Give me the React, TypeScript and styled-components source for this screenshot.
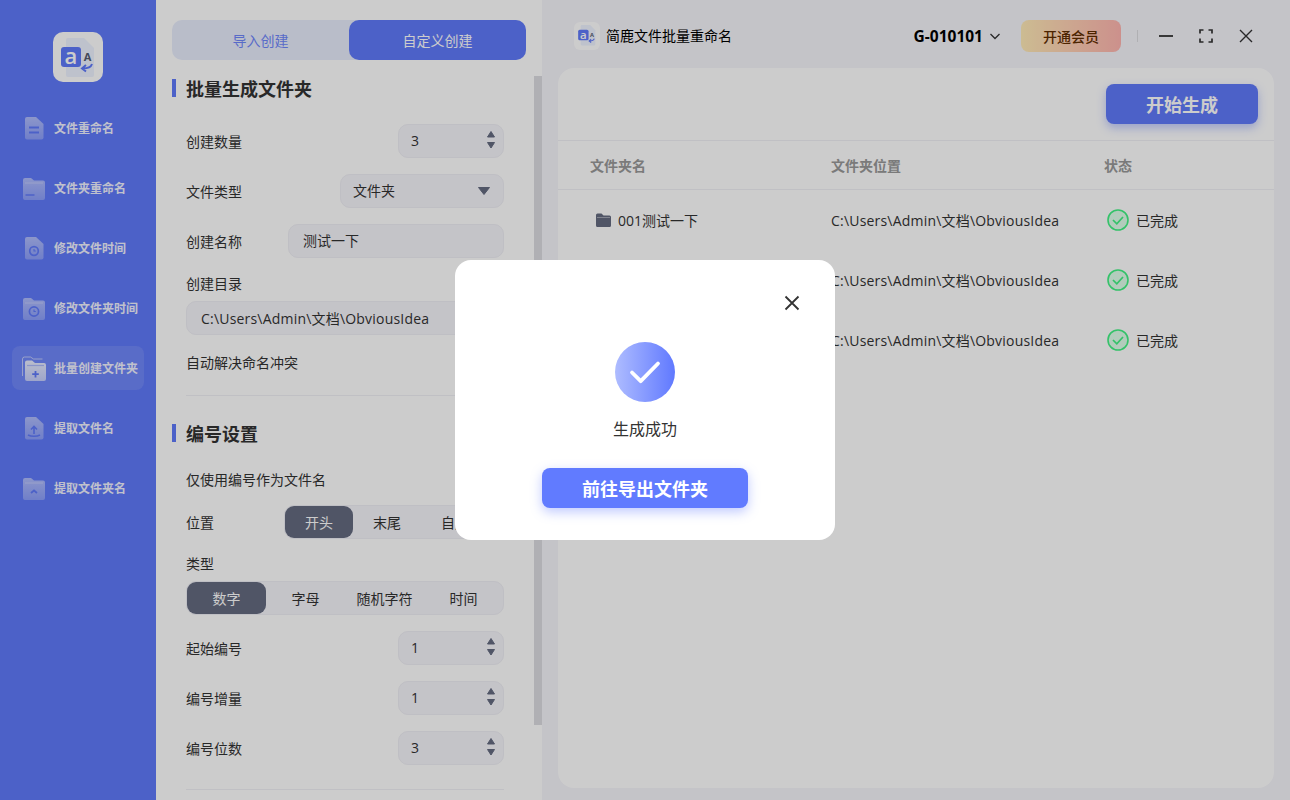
import React from "react";
import styled, { createGlobalStyle } from "styled-components";

const Global = createGlobalStyle`
  html, body { margin: 0; padding: 0; height: 100%; overflow: hidden; }
  body { font-family: "Open Sans", "Noto Sans CJK SC", sans-serif; color: #333; }
  * { box-sizing: border-box; }
`;

const Page = styled.div`
  display: flex;
  width: 100vw;
  height: 100vh;
  background: #f6f5fb;
  overflow: hidden;
`;

const Sidebar = styled.aside`
  width: 156px;
  flex: none;
  background: #607afb;
  display: flex;
  flex-direction: column;
  align-items: center;
  padding-top: 32px;
`;

const LogoBox = styled.div`
  width: 50px;
  height: 50px;
  border-radius: 10px;
  background: #fff;
  margin-bottom: 24px;
  display: flex;
`;

const Nav = styled.nav`
  display: flex;
  flex-direction: column;
  gap: 16px;
  width: 132px;
`;

const NavItem = styled.div<{ $active?: boolean }>`
  height: 44px;
  border-radius: 8px;
  display: flex;
  align-items: center;
  gap: 9px;
  padding-left: 11px;
  font-size: 12px;
  font-weight: 700;
  white-space: nowrap;
  color: #f0f2ff;
  background: ${(p) => (p.$active ? "rgba(255,255,255,0.1)" : "transparent")};
  svg { flex: none; }
`;

const WideIcon = styled.svg`
  margin: 0 -2px 0 -1px;
`;

const Panel = styled.section`
  position: relative;
  width: 386px;
  flex: none;
  height: 100%;
  background: #fff;
  padding: 20px 16px 0;
  overflow: hidden;
`;

const ScrollThumb = styled.div`
  position: absolute;
  right: 0;
  top: 76px;
  width: 8px;
  height: 649px;
  background: #dcdce1;
`;

const Tabs = styled.div`
  display: flex;
  height: 40px;
  border-radius: 10px;
  background: #e8edfc;
`;

const Tab = styled.div<{ $active?: boolean }>`
  flex: 1;
  display: flex;
  align-items: center;
  justify-content: center;
  border-radius: 10px;
  font-size: 14px;
  color: ${(p) => (p.$active ? "#fff" : "#6f86fb")};
  background: ${(p) => (p.$active ? "#607afb" : "transparent")};
`;

const Heading = styled.h2<{ $top: number }>`
  position: relative;
  margin: ${(p) => p.$top}px 0 0;
  padding-left: 14px;
  height: 18px;
  line-height: 20px;
  font-size: 18px;
  font-weight: 700;
  color: #333;
  &::before {
    content: "";
    position: absolute;
    left: 0;
    top: 0;
    width: 4px;
    height: 18px;
    background: #607afb;
  }
`;

const Form = styled.div`
  padding: 0 22px 0 14px;
`;

const Row = styled.div<{ $top?: number }>`
  display: flex;
  align-items: center;
  justify-content: space-between;
  height: 34px;
  margin-top: ${(p) => p.$top ?? 16}px;
  padding-bottom: 1px;
  font-size: 14px;
  color: #333;
`;

const Label = styled.div<{ $top?: number }>`
  height: 20px;
  line-height: 20px;
  margin-top: ${(p) => p.$top ?? 16}px;
  font-size: 14px;
  color: #333;
`;

const Field = styled.div<{ $width?: number; $top?: number }>`
  position: relative;
  width: ${(p) => (p.$width ? `${p.$width}px` : "100%")};
  height: 34px;
  flex: none;
  margin-top: ${(p) => p.$top ?? 0}px;
  display: flex;
  align-items: center;
  padding: 0 0 1px 14px;
  background: #f6f5fb;
  border: 1px solid #efeff5;
  border-radius: 10px;
  font-size: 14px;
  color: #333;
  white-space: nowrap;
`;

const NumberField = styled(Field)`
  padding-left: 12px;
`;

const SelectField = styled(Field)`
  padding-left: 12px;
`;

const PathText = styled.span`
  letter-spacing: 0.2px;
`;

const Stepper = styled.svg`
  position: absolute;
  right: 6px;
  top: 5px;
`;

const SelectArrow = styled.svg`
  position: absolute;
  right: 12px;
  top: 11px;
`;

const Divider = styled.div<{ $top: number }>`
  height: 1px;
  margin-top: ${(p) => p.$top}px;
  background: #f1f1f5;
`;

const Segments = styled.div<{ $top?: number; $width?: number }>`
  display: flex;
  flex: none;
  width: ${(p) => (p.$width ? `${p.$width}px` : "100%")};
  height: 34px;
  margin-top: ${(p) => p.$top ?? 0}px;
  padding: 0;
  align-items: stretch;
  background: #f6f5fb;
  border: 1px solid #efeff5;
  border-radius: 10px;
  font-size: 14px;
`;

const Segment = styled.div<{ $active?: boolean; $even?: boolean }>`
  ${(p) => (p.$even ? "flex: 1 1 0;" : "padding: 0 20px;")}
  display: flex;
  align-items: center;
  justify-content: center;
  white-space: nowrap;
  border-radius: 9px;
  color: ${(p) => (p.$active ? "#fff" : "#333")};
  background: ${(p) => (p.$active ? "#646b80" : "transparent")};
`;

const Main = styled.main`
  flex: 1;
  min-width: 0;
  height: 100%;
  display: flex;
  flex-direction: column;
  padding: 0 16px 12px;
`;

const TitleBar = styled.header`
  flex: none;
  height: 68px;
  display: flex;
  align-items: center;
  justify-content: space-between;
  padding: 4px 21px 0 16px;
`;

const AppName = styled.div`
  display: flex;
  align-items: center;
  gap: 6px;
  font-size: 14px;
  color: #000;
`;

const AppTitle = styled.span`
  margin-bottom: 2px;
`;

const MiniLogo = styled.div`
  width: 26px;
  height: 28px;
  border-radius: 6px;
  background: #fff;
  display: flex;
`;

const TitleRight = styled.div`
  display: flex;
  align-items: center;
`;

const Account = styled.div`
  display: flex;
  align-items: center;
  gap: 6px;
  font-family: "Noto Sans", "Noto Sans CJK SC", sans-serif;
  font-size: 15.5px;
  font-weight: 700;
  color: #000;
  margin-right: 20px;
`;

const VipButton = styled.div`
  width: 100px;
  height: 32px;
  border-radius: 8px;
  display: flex;
  align-items: center;
  justify-content: center;
  font-size: 14px;
  font-weight: 500;
  color: #5f2d00;
  background: linear-gradient(90deg, #ffebb7, #ffb5b0);
`;

const Sep = styled.div`
  width: 1px;
  height: 12px;
  background: #dcdce0;
  margin: 0 21px 0 16px;
`;

const WinControls = styled.div`
  display: flex;
  align-items: center;
  gap: 26px;
`;

const Card = styled.div`
  flex: 1;
  min-height: 0;
  background: #fff;
  border-radius: 16px;
  overflow: hidden;
`;

const CardTop = styled.div`
  height: 73px;
  padding: 16px 16px 0;
  display: flex;
  justify-content: flex-end;
  border-bottom: 1px solid #f1f1f5;
`;

const StartButton = styled.div`
  width: 152px;
  height: 40px;
  border-radius: 8px;
  background: #607afb;
  color: #fff;
  display: flex;
  align-items: center;
  justify-content: center;
  font-size: 18px;
  font-weight: 700;
  box-shadow: 0 4px 10px rgba(96, 122, 251, 0.4);
`;

const TableGrid = `
  display: grid;
  grid-template-columns: 241px 273px 1fr;
  padding-left: 32px;
  align-items: center;
`;

const TableHead = styled.div`
  ${TableGrid}
  height: 49px;
  border-bottom: 1px solid #f1f1f5;
  font-size: 14px;
  font-weight: 700;
  color: #999;
`;

const TableRow = styled.div`
  ${TableGrid}
  height: 60px;
  font-size: 14px;
  color: #333;
`;

const NameCell = styled.div`
  display: flex;
  align-items: center;
  gap: 7px;
  padding-left: 6px;
`;

const StatusCell = styled.div`
  display: flex;
  align-items: center;
  gap: 7px;
  padding-left: 3px;
`;

const Overlay = styled.div`
  position: fixed;
  inset: 0;
  display: flex;
  align-items: center;
  justify-content: center;
  background: rgba(0, 0, 0, 0.2);
`;

const Modal = styled.div`
  position: relative;
  width: 380px;
  height: 280px;
  border-radius: 16px;
  background: #fff;
  padding-top: 82px;
  display: flex;
  flex-direction: column;
  align-items: center;
`;

const CloseIcon = styled.svg`
  position: absolute;
  top: 35px;
  right: 35px;
`;

const SuccessCircle = styled.div`
  width: 60px;
  height: 60px;
  border-radius: 50%;
  background: linear-gradient(90deg, #aebcff, #6079ff);
  display: flex;
`;

const SuccessText = styled.div`
  margin-top: 15px;
  height: 24px;
  line-height: 24px;
  font-size: 16px;
  color: #333;
`;

const GoButton = styled.div`
  margin-top: 27px;
  width: 206px;
  height: 40px;
  border-radius: 8px;
  background: #617bff;
  color: #fff;
  display: flex;
  align-items: center;
  justify-content: center;
  font-size: 18px;
  font-weight: 700;
  box-shadow: 0 4px 12px rgba(97, 123, 255, 0.4);
`;

const Logo = ({ size }: { size: number }) => (
  <svg width={size} height={size} viewBox="0 0 50 50">
    <path d="M15 6h16l10 10v27a2 2 0 0 1-2 2H15a2 2 0 0 1-2-2V8a2 2 0 0 1 2-2z" fill="#eef3ff" />
    <rect x="8" y="15" width="20" height="20" rx="3" fill="#607afb" />
    <text x="18" y="32" textAnchor="middle" fontFamily="'Open Sans', sans-serif" fontSize="22" fontWeight="600" fill="#fff">a</text>
    <text x="34.5" y="29" textAnchor="middle" fontFamily="'Open Sans', sans-serif" fontSize="11" fontWeight="700" fill="#555b70">A</text>
    <path d="M39 32c-1 3-4 4.500-9 4.500M33 33l-4 3.500 4 3" fill="none" stroke="#607afb" strokeWidth="2" />
  </svg>
);

const Tint = () => (
  <defs>
    <linearGradient id="nt" x1="0" y1="0" x2="0" y2="1">
      <stop offset="0" stopColor="#fff" stopOpacity=".5" />
      <stop offset="1" stopColor="#fff" stopOpacity=".28" />
    </linearGradient>
    <linearGradient id="na" x1="0" y1="0" x2="0" y2="1">
      <stop offset="0" stopColor="#fff" stopOpacity=".85" />
      <stop offset="1" stopColor="#fff" stopOpacity=".6" />
    </linearGradient>
  </defs>
);

const DOC = "M3 1h9l7.500 7v13.500a2 2 0 0 1-2 2H3a2 2 0 0 1-2-2V3a2 2 0 0 1 2-2z";
const FOLDER = "M2 2h6l3 2.500h9a2 2 0 0 1 2 2V22a2 2 0 0 1-2 2H2a2 2 0 0 1-2-2V4a2 2 0 0 1 2-2z";
const INK = "#607afb";

const IconDoc = ({ children }: { children?: React.ReactNode }) => (
  <svg width="22" height="24" viewBox="-1 0 22 24">
    <Tint />
    <path d={DOC} fill="url(#nt)" />
    {children}
  </svg>
);

const IconFolder = ({ children }: { children?: React.ReactNode }) => (
  <svg width="22" height="24" viewBox="0 0 22 24">
    <Tint />
    <path d={FOLDER} fill="url(#nt)" />
    <path d="M2 7h18" stroke="#fff" strokeOpacity=".2" strokeWidth="1.500" />
    {children}
  </svg>
);

const ClockMark = ({ cx, cy, r }: { cx: number; cy: number; r: number }) => (
  <g fill="none" stroke={INK} strokeWidth="1.700">
    <circle cx={cx} cy={cy} r={r} />
    <path d={`M${cx} ${cy - 2}v2h1.800`} strokeWidth="1.100" />
  </g>
);

const navIcons: React.ReactNode[] = [
  <IconDoc key="a">
    <path d="M5 11.500h10M5 16.500h10" stroke={INK} strokeWidth="1.800" />
  </IconDoc>,
  <IconFolder key="b">
    <path d="M2.500 19h9" stroke={INK} strokeWidth="1.500" />
  </IconFolder>,
  <IconDoc key="c">
    <ClockMark cx={10} cy={15} r={4.3} />
  </IconDoc>,
  <IconFolder key="d">
    <ClockMark cx={11} cy={15.5} r={4.6} />
  </IconFolder>,
  <WideIcon key="e" width="25" height="25" viewBox="0 0 25 25">
    <Tint />
    <path d="M0.500 20V3a2 2 0 0 1 2-2h6l3 2h9" fill="none" stroke="#fff" strokeOpacity=".55" strokeWidth="1" />
    <path d="M5 4.500h5l3 2.500h9a2 2 0 0 1 2 2V23a2 2 0 0 1-2 2H5a2 2 0 0 1-2-2V6.500a2 2 0 0 1 2-2z" fill="url(#na)" />
    <path d="M5 9.500h17" stroke={INK} strokeOpacity=".4" strokeWidth="1.200" />
    <path d="M13.500 15v6.500M10.200 18.200h6.600" stroke={INK} strokeWidth="1.800" />
  </WideIcon>,
  <IconDoc key="f">
    <path d="M10 18v-7M7 13.500l3-3 3 3" fill="none" stroke={INK} strokeWidth="1.600" />
    <path d="M4 19c3 1.800 9 1.800 12 0" fill="none" stroke={INK} strokeWidth="1.500" />
  </IconDoc>,
  <IconFolder key="g">
    <path d="M8 17l3-2.500 3 2.500" fill="none" stroke={INK} strokeWidth="1.800" />
  </IconFolder>,
];

const navLabels = ["文件重命名", "文件夹重命名", "修改文件时间", "修改文件夹时间", "批量创建文件夹", "提取文件名", "提取文件夹名"];

const NumberInput = ({ value }: { value: number }) => (
  <NumberField $width={106}>
    {value}
    <Stepper width="12" height="20" viewBox="0 0 12 20">
      <path d="M6 1.500L9.500 7H2.500z" fill="#646b80" stroke="#646b80" strokeLinejoin="round" />
      <path d="M6 18L2.500 12.500H9.500z" fill="#646b80" stroke="#646b80" strokeLinejoin="round" />
    </Stepper>
  </NumberField>
);

const rows = ["001测试一下", "002测试一下", "003测试一下"];
const PATH = "C:\\Users\\Admin\\文档\\ObviousIdea";

export default function App() {
  return (
    <Page>
      <Global />
      <Sidebar>
        <LogoBox>
          <Logo size={50} />
        </LogoBox>
        <Nav>
          {navLabels.map((label, i) => (
            <NavItem key={label} $active={i === 4}>
              {navIcons[i]}
              {label}
            </NavItem>
          ))}
        </Nav>
      </Sidebar>

      <Panel>
        <ScrollThumb />
        <Tabs>
          <Tab>导入创建</Tab>
          <Tab $active>自定义创建</Tab>
        </Tabs>
        <Heading $top={19}>批量生成文件夹</Heading>
        <Form>
          <Row $top={27}>
            创建数量
            <NumberInput value={3} />
          </Row>
          <Row>
            文件类型
            <SelectField $width={164}>
              文件夹
              <SelectArrow width="14" height="10" viewBox="0 0 14 10">
                <path d="M1.500 1.500h11L7 8.500z" fill="#646b80" stroke="#646b80" strokeLinejoin="round" />
              </SelectArrow>
            </SelectField>
          </Row>
          <Row>
            创建名称
            <Field $width={216}>测试一下</Field>
          </Row>
          <Label>创建目录</Label>
          <Field $top={7}><PathText>{PATH}</PathText></Field>
          <Row $top={10}>自动解决命名冲突</Row>
          <Divider $top={16} />
        </Form>
        <Heading $top={28}>编号设置</Heading>
        <Form>
          <Row $top={20}>仅使用编号作为文件名</Row>
          <Row $top={9}>
            位置
            <Segments $width={220}>
              <Segment $active>开头</Segment>
              <Segment>末尾</Segment>
              <Segment>自定义</Segment>
            </Segments>
          </Row>
          <Label $top={15}>类型</Label>
          <Segments $top={7}>
            <Segment $even $active>数字</Segment>
            <Segment $even>字母</Segment>
            <Segment $even>随机字符</Segment>
            <Segment $even>时间</Segment>
          </Segments>
          <Row>
            起始编号
            <NumberInput value={1} />
          </Row>
          <Row>
            编号增量
            <NumberInput value={1} />
          </Row>
          <Row>
            编号位数
            <NumberInput value={3} />
          </Row>
          <Divider $top={24} />
        </Form>
      </Panel>

      <Main>
        <TitleBar>
          <AppName>
            <MiniLogo>
              <Logo size={26} />
            </MiniLogo>
            <AppTitle>简鹿文件批量重命名</AppTitle>
          </AppName>
          <TitleRight>
            <Account>
              G-010101
              <svg width="12" height="12" viewBox="0 0 12 12">
                <path d="M1.500 4l4.500 4.500L10.500 4" fill="none" stroke="#333" strokeWidth="1.300" />
              </svg>
            </Account>
            <VipButton>开通会员</VipButton>
            <Sep />
            <WinControls>
              <svg width="14" height="14" viewBox="0 0 14 14">
                <path d="M0 7h14" stroke="#333" strokeWidth="1.800" />
              </svg>
              <svg width="14" height="14" viewBox="0 0 14 14">
                <path d="M1 4.500V1h3.500M9.500 1H13v3.500M13 9.500V13H9.500M4.500 13H1V9.500" fill="none" stroke="#333" strokeWidth="1.700" />
              </svg>
              <svg width="14" height="14" viewBox="0 0 14 14">
                <path d="M1 1l12 12M13 1L1 13" stroke="#333" strokeWidth="1.400" />
              </svg>
            </WinControls>
          </TitleRight>
        </TitleBar>
        <Card>
          <CardTop>
            <StartButton>开始生成</StartButton>
          </CardTop>
          <TableHead>
            <div>文件夹名</div>
            <div>文件夹位置</div>
            <div>状态</div>
          </TableHead>
          <div>
            {rows.map((name) => (
              <TableRow key={name}>
                <NameCell>
                  <svg width="15" height="14" viewBox="0 0 15 14">
                    <path d="M1.500 0.500h4l2 2h6a1.500 1.500 0 0 1 1.500 1.500v8.500a1.500 1.500 0 0 1-1.500 1.500h-12A1.500 1.500 0 0 1 0 12.500V2a1.500 1.500 0 0 1 1.500-1.500z" fill="#646b80" />
                    <path d="M1 4.500h13" stroke="#fff" strokeOpacity=".5" strokeWidth=".8" />
                  </svg>
                  {name}
                </NameCell>
                <PathText>{PATH}</PathText>
                <StatusCell>
                  <svg width="22" height="22" viewBox="0 0 22 22">
                    <circle cx="11" cy="11" r="10" fill="#dfffec" stroke="#42f384" strokeWidth="1.600" />
                    <path d="M6 11l3.800 3.800L16 8" fill="none" stroke="#42f384" strokeWidth="1.700" />
                  </svg>
                  已完成
                </StatusCell>
              </TableRow>
            ))}
          </div>
        </Card>
      </Main>

      <Overlay>
        <Modal>
          <CloseIcon width="16" height="16" viewBox="0 0 16 16">
            <path d="M1.500 1.500l13 13M14.500 1.500l-13 13" stroke="#333" strokeWidth="1.800" />
          </CloseIcon>
          <SuccessCircle>
            <svg width="60" height="60" viewBox="0 0 60 60">
              <path d="M17 30.500l8.700 8.700L43 21.500" fill="none" stroke="#fff" strokeWidth="3.800" strokeLinecap="round" strokeLinejoin="round" />
            </svg>
          </SuccessCircle>
          <SuccessText>生成成功</SuccessText>
          <GoButton>前往导出文件夹</GoButton>
        </Modal>
      </Overlay>
    </Page>
  );
}
